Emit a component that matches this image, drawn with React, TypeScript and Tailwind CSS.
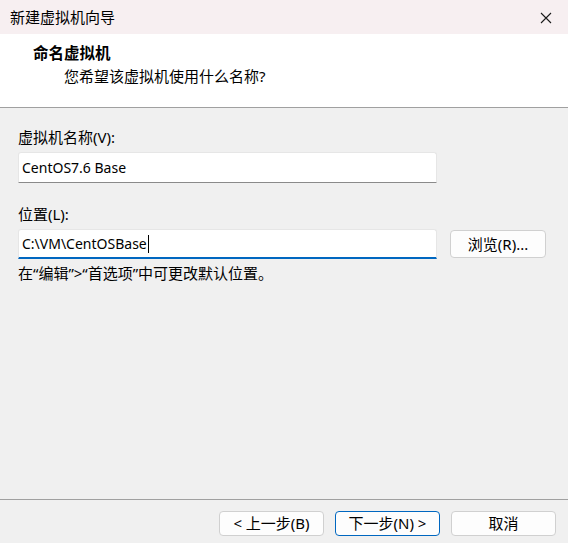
import React from "react";

const font = "font-['Noto_Sans','Noto_Sans_CJK_SC',sans-serif]";

const WizardButton: React.FC<{ label: string; primary?: boolean }> = ({ label, primary }) => (
	<button
		type="button"
		className={
			primary
				? "w-[105px] h-[25px] rounded-[4px] bg-[#fdfdfd] border border-[#0067c0] text-[15px] leading-none text-black"
				: "w-[105px] h-[25px] rounded-[4px] bg-[#fdfdfd] border border-[#d0d0d0] text-[15px] leading-none text-black"
		}
	>
		{label}
	</button>
);

const App: React.FC = () => {
	return (
		<div className={`w-[568px] h-[543px] flex flex-col bg-[#f0f0f0] text-black ${font}`}>
			{/* title bar */}
			<div className="h-[34px] flex items-center justify-between pl-[10px] pr-[16px] bg-[#f7eff1]">
				<span className="text-[15px]">新建虚拟机向导</span>
				<svg width="12" height="12" viewBox="0 0 12 12" className="mt-[1px]">
					<path d="M1 1 L11 11 M11 1 L1 11" stroke="#1a1a1a" strokeWidth="1.1" />
				</svg>
			</div>

			{/* header */}
			<div className="h-[74px] bg-white border-b border-[#a0a0a0] pt-[9px]">
				<div className="pl-[33px] text-[15.5px] font-bold leading-[20px]">命名虚拟机</div>
				<div className="pl-[64px] mt-[3px] text-[15px] leading-[20px]">您希望该虚拟机使用什么名称?</div>
			</div>

			{/* body */}
			<div className="flex-1 flex flex-col px-[18px] pt-[19px]">
				<label className="text-[15px] leading-[20px]">虚拟机名称(V):</label>
				<div className="mt-[5px] w-[419px] h-[31px] bg-white border border-[#e6e6e6] border-b-[#8a8a8a] rounded-t-[3px] flex items-center pl-[3px] text-[14px]">
					CentOS7.6 Base
				</div>

				<label className="mt-[21px] text-[15px] leading-[20px]">位置(L):</label>
				<div className="mt-[5px] flex items-center">
					<div className="w-[419px] h-[30px] bg-white border border-[#e6e6e6] border-b-2 border-b-[#0067c0] rounded-t-[3px] flex items-center pl-[3px] text-[14px]">
						C:\VM\CentOSBase
						<span className="ml-[1px] w-[1px] h-[18px] bg-black" />
					</div>
					<button
						type="button"
						className="ml-[13px] w-[96px] h-[28px] rounded-[4px] bg-[#fdfdfd] border border-[#d0d0d0] text-[15px] leading-none"
					>
						浏览(R)...
					</button>
				</div>
				<div className="mt-[4px] text-[15px] leading-[20px]">在“编辑”&gt;“首选项”中可更改默认位置。</div>
			</div>

			{/* footer */}
			<div className="h-[44px] border-t border-[#a0a0a0] flex justify-end gap-[11px] pr-[12px] pt-[11px]">
				<WizardButton label="< 上一步(B)" />
				<WizardButton label="下一步(N) >" primary />
				<WizardButton label="取消" />
			</div>
		</div>
	);
};

export default App;
